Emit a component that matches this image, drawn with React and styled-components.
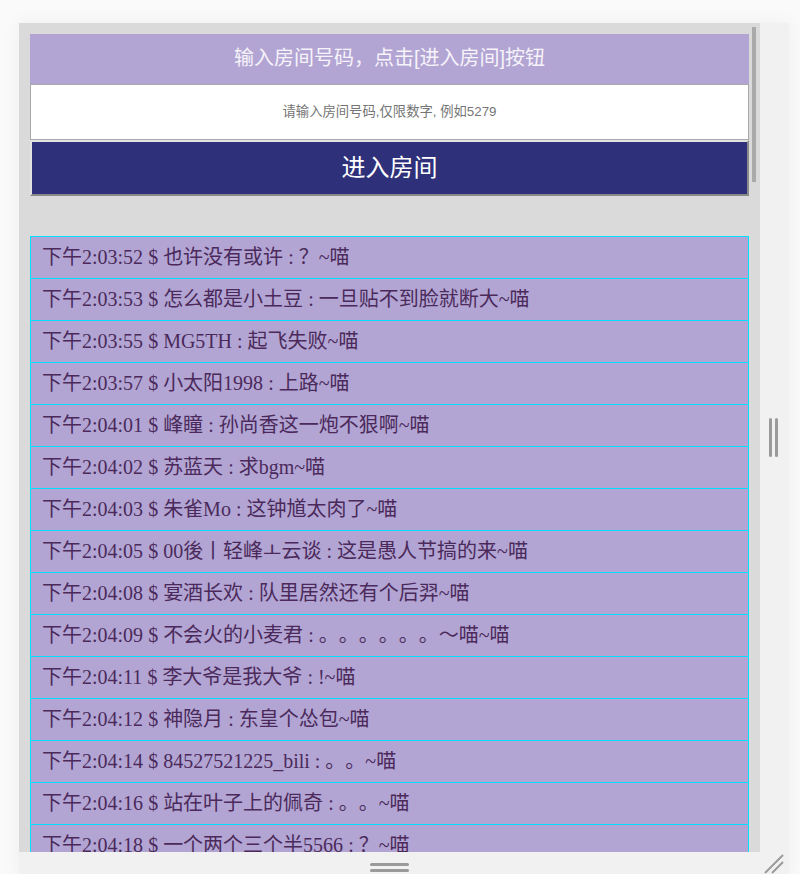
import React from "react";
import styled, { createGlobalStyle } from "styled-components";

const GlobalStyle = createGlobalStyle`
  html, body {
    margin: 0;
    padding: 0;
    background: #fafafa;
    overflow: hidden;
  }
`;

const Page = styled.div`
  padding: 23px 0 0 19px;
`;

const Frame = styled.div`
  display: grid;
  grid-template-columns: 741px 29px;
  grid-template-rows: 829px 30px;
  width: 770px;
  box-shadow: 0 0 18px rgba(0, 0, 0, 0.05);
`;

const Panel = styled.div`
  position: relative;
  background: #dadada;
  padding: 11px 11px 0 11px;
  overflow: hidden;
`;

const ScrollThumb = styled.div`
  position: absolute;
  top: 4px;
  right: 4px;
  width: 4px;
  height: 155px;
  background: #aaaaaa;
`;

const SideStrip = styled.div`
  background: #f1f1f1;
  display: flex;
  align-items: center;
  justify-content: center;
  gap: 3px;
  padding-right: 2px;
`;

const VBar = styled.span`
  width: 3px;
  height: 39px;
  border-radius: 2px;
  background: #9a9a9a;
`;

const BottomStrip = styled.div`
  background: #f1f1f1;
  display: flex;
  flex-direction: column;
  align-items: center;
  justify-content: center;
  gap: 3px;
  padding-top: 1px;
`;

const HBar = styled.span`
  width: 39px;
  height: 3px;
  border-radius: 2px;
  background: #9a9a9a;
`;

const Corner = styled.div`
  background: #f1f1f1;
`;

const Header = styled.div`
  box-sizing: border-box;
  height: 50px;
  padding-bottom: 5px;
  background: #b2a5d3;
  color: #f6f3fa;
  font-family: "Liberation Sans", "Noto Sans CJK SC", sans-serif;
  font-size: 20px;
  display: flex;
  align-items: center;
  justify-content: center;
`;

const RoomInput = styled.input`
  display: block;
  box-sizing: border-box;
  width: 100%;
  height: 56px;
  margin: 0;
  padding: 0 0 2px 0;
  border: 1px solid #a9a9a9;
  background: #fff;
  text-align: center;
  font-family: "Liberation Sans", "Noto Sans CJK SC", sans-serif;
  font-size: 13.333px;
  outline: none;
  &::placeholder {
    color: #757575;
  }
`;

const EnterButton = styled.button`
  display: block;
  box-sizing: border-box;
  width: 100%;
  height: 56px;
  margin: 0;
  padding: 0 0 5px 0;
  border-style: solid;
  border-width: 2px;
  border-color: #e2e2e2 #8a8a8a #8a8a8a #e2e2e2;
  background: #2e307a;
  color: #ffffff;
  font-family: "Liberation Sans", "Noto Sans CJK SC", sans-serif;
  font-size: 24px;
  cursor: pointer;
`;

const MessageList = styled.ul`
  list-style: none;
  margin: 40px 0 0 0;
  padding: 0;
  border-top: 1px solid #00e1ff;
`;

const MessageItem = styled.li`
  box-sizing: border-box;
  height: 42px;
  line-height: 41px;
  padding-left: 11px;
  background: #b2a5d3;
  border: 1px solid #00e1ff;
  border-top: none;
  color: #4b2a5b;
  font-family: "Liberation Serif", "Noto Sans CJK SC", serif;
  font-size: 20px;
  text-spacing-trim: space-all;
  white-space: nowrap;
  overflow: hidden;
`;

const messages = [
  ["下午2:03:52", "也许没有或许", "？~喵"],
  ["下午2:03:53", "怎么都是小土豆", "一旦贴不到脸就断大~喵"],
  ["下午2:03:55", "MG5TH", "起飞失败~喵"],
  ["下午2:03:57", "小太阳1998", "上路~喵"],
  ["下午2:04:01", "峰瞳", "孙尚香这一炮不狠啊~喵"],
  ["下午2:04:02", "苏蓝天", "求bgm~喵"],
  ["下午2:04:03", "朱雀Mo", "这钟馗太肉了~喵"],
  ["下午2:04:05", "00後丨轻峰ㅗ云谈", "这是愚人节搞的来~喵"],
  ["下午2:04:08", "宴酒长欢", "队里居然还有个后羿~喵"],
  ["下午2:04:09", "不会火的小麦君", "。。。。。。〜喵~喵"],
  ["下午2:04:11", "李大爷是我大爷", "!~喵"],
  ["下午2:04:12", "神隐月", "东皇个怂包~喵"],
  ["下午2:04:14", "84527521225_bili", "。。~喵"],
  ["下午2:04:16", "站在叶子上的佩奇", "。。~喵"],
  ["下午2:04:18", "一个两个三个半5566", "？~喵"],
  ["下午2:04:20", "小太阳1998", "666~喵"],
];

export default function App() {
  return (
    <>
      <GlobalStyle />
      <Page>
        <Frame>
          <Panel>
            <Header>输入房间号码，点击[进入房间]按钮</Header>
            <RoomInput placeholder="请输入房间号码,仅限数字, 例如5279" />
            <EnterButton>进入房间</EnterButton>
            <MessageList>
              {messages.map(([time, user, text], i) => (
                <MessageItem key={i}>
                  {time} $ {user} : {text}
                </MessageItem>
              ))}
            </MessageList>
            <ScrollThumb />
          </Panel>
          <SideStrip>
            <VBar />
            <VBar />
          </SideStrip>
          <BottomStrip>
            <HBar />
            <HBar />
          </BottomStrip>
          <Corner>
            <svg width="29" height="30" viewBox="0 0 29 30">
              <line x1="23" y1="3" x2="5" y2="21" stroke="#9a9a9a" strokeWidth="2" />
              <line x1="23" y1="10" x2="12" y2="21" stroke="#9a9a9a" strokeWidth="2" />
            </svg>
          </Corner>
        </Frame>
      </Page>
    </>
  );
}
